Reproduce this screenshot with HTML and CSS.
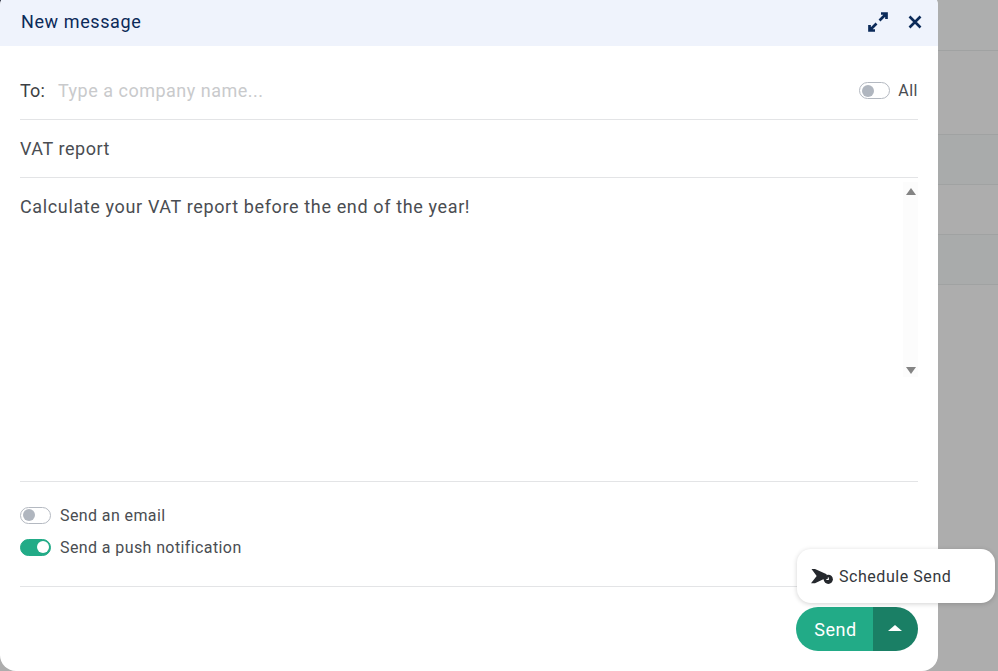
FILE: index.html
```html
<!DOCTYPE html>
<html lang="en">
<head>
<meta charset="utf-8">
<title>New message</title>
<link rel="stylesheet" href="styles.css">
</head>
<body>
<div class="backdrop">
  <div class="bg-corner"></div>
  <div class="bg-rows">
    <div class="bg-row r1"></div>
    <div class="bg-row r2"></div>
    <div class="bg-row r3"></div>
    <div class="bg-row r4"></div>
    <div class="bg-row r5"></div>
  </div>
</div>
<main class="dialog">
  <header class="head">
    <h1 class="title">New message</h1>
    <div class="head-icons">
      <svg class="ic-expand" width="22" height="22" viewBox="0 0 22 22"><path d="M12.500 9.500 19 3M14 2.500h5.500V8M9.500 12.500 3 19M2.500 14v5.500H8" fill="none" stroke="#0b2a59" stroke-width="2.700"/></svg>
      <svg class="ic-close" width="14" height="14" viewBox="0 0 14 14"><path d="M1.500 1.500l11 11M12.500 1.500l-11 11" fill="none" stroke="#0b2a59" stroke-width="2.600"/></svg>
    </div>
  </header>
  <div class="body">
    <div class="row to-row">
      <span class="to">To:</span>
      <span class="placeholder">Type a company name...</span>
      <span class="all"><span class="toggle"><span class="knob"></span></span>All</span>
    </div>
    <div class="row subject">VAT report</div>
    <div class="message">
      <p class="message-text">Calculate your VAT report before the end of the year!</p>
      <div class="scrollbar"><span class="arrow up"></span><span class="arrow down"></span></div>
    </div>
    <div class="options">
      <label class="opt"><span class="toggle"><span class="knob"></span></span>Send an email</label>
      <label class="opt"><span class="toggle on"><span class="knob"></span></span>Send a push notification</label>
    </div>
    <div class="foot">
      <div class="send-group">
        <span class="send">Send</span>
        <span class="more"><span class="caret"></span></span>
      </div>
    </div>
  </div>
</main>
<div class="menu">
  <svg width="24" height="18" viewBox="0 0 24 18"><path d="M1.500 2H5L16.700 7.300 15 12.300H13.300L5 16.300H1L6.700 9z" fill="#25282d"/><circle cx="18.300" cy="12.300" r="4.600" fill="#25282d"/><path d="M18.300 10.400v2.100h-1.900" fill="none" stroke="#fff" stroke-width="1.100"/></svg>
  <span>Schedule Send</span>
</div>
</body>
</html>
```
FILE: styles.css
```css
* { box-sizing: border-box; }
html, body { margin: 0; height: 100%; }
body {
  width: 998px; height: 671px; overflow: hidden; position: relative;
  font-family: "Roboto", "Liberation Sans", sans-serif;
  background: #adadad; color: #4a4d52;
}
.backdrop { position: absolute; inset: 0; }
.bg-corner { position: absolute; left: 0; top: 0; width: 6px; height: 6px; background: #2b3040; }
.bg-rows { display: flex; flex-direction: column; }
.bg-row { border-bottom: 1px solid #a0a2a2; }
.r1 { height: 51px; background: #adaeae; }
.r2 { height: 84px; }
.r3 { height: 50px; background: #a9abab; }
.r4 { height: 50px; }
.r5 { height: 50px; background: #a9abab; }
.dialog {
  position: absolute; left: 0; top: -10px; width: 938px; height: 681px;
  background: #fff; border-radius: 16px; overflow: hidden;
  display: flex; flex-direction: column;
}
.head {
  height: 56px; padding: 7px 16px 0 21px; flex: none;
  background: #eff3fc; display: flex; align-items: center; justify-content: space-between;
}
.title { margin: 0; font-size: 18px; font-weight: 400; color: #0b2a59; letter-spacing: .6px; }
.head-icons { display: flex; align-items: center; gap: 19px; }
.body { flex: 1; padding: 0 20px; display: flex; flex-direction: column; min-height: 0; }
.row { display: flex; align-items: center; font-size: 18px; letter-spacing: .55px; }
.to-row { height: 74px; padding-top: 16px; border-bottom: 1px solid #e3e4e6; }
.to { color: #3c3f44; width: 38px; letter-spacing: .2px; }
.placeholder { color: #c9cacc; flex: 1; letter-spacing: .5px; }
.all { display: flex; align-items: center; gap: 8px; font-size: 16px; letter-spacing: .5px; color: #4a4d52; }
.subject { height: 58px; border-bottom: 1px solid #e3e4e6; color: #4a4d52; }
.message { height: 304px; border-bottom: 1px solid #e3e4e6; display: flex; justify-content: space-between; padding-top: 4px; }
.message-text { margin: 15px 0 0; font-size: 18px; letter-spacing: .63px; color: #4a4d52; line-height: 20px; }
.scrollbar {
  width: 15px; height: 195px; background: #fcfcfc;
  display: flex; flex-direction: column; justify-content: space-between; align-items: center; padding: 6px 0 3px;
}
.arrow { width: 0; height: 0; border-left: 5px solid transparent; border-right: 5px solid transparent; }
.up { border-bottom: 7px solid #848484; }
.down { border-top: 7px solid #848484; }
.options { height: 105px; border-bottom: 1px solid #e3e4e6; padding-top: 24px; display: flex; flex-direction: column; gap: 14px; }
.opt { display: flex; align-items: center; gap: 9px; font-size: 16px; letter-spacing: .4px; color: #4a4d52; height: 18px; }
.toggle {
  display: inline-block; width: 31px; height: 17px; border: 1px solid #b4b9c1; border-radius: 9px; background: #fff;
  position: relative; flex: none;
}
.knob { position: absolute; left: 2px; top: 1.500px; width: 12px; height: 12px; border-radius: 50%; background: #b0b6bf; }
.toggle.on { background: #22ab87; border-color: #22ab87; }
.toggle.on .knob { left: 16px; background: #fff; }
.foot { flex: 1; display: flex; justify-content: flex-end; align-items: flex-start; padding-top: 20px; }
.send-group { display: flex; height: 44px; border-radius: 22px; overflow: hidden; color: #fff; }
.send { width: 77px; background: #22ab87; font-size: 18px; letter-spacing: .5px; display: flex; align-items: center; justify-content: center; padding-left: 2px; }
.more { width: 45px; background: #1a7f65; display: flex; align-items: center; justify-content: center; padding-right: 2px; }
.caret { width: 0; height: 0; border-left: 7px solid transparent; border-right: 7px solid transparent; border-bottom: 6px solid #fff; margin-bottom: 2px; }
.menu {
  position: absolute; left: 797px; top: 549px; width: 198px; height: 54px;
  background: #fff; border-radius: 14px; box-shadow: 0 1px 5px rgba(0,0,0,.18);
  display: flex; align-items: center; gap: 5px; padding-left: 13px;
  font-size: 16px; letter-spacing: .55px; color: #34373c;
}
```
